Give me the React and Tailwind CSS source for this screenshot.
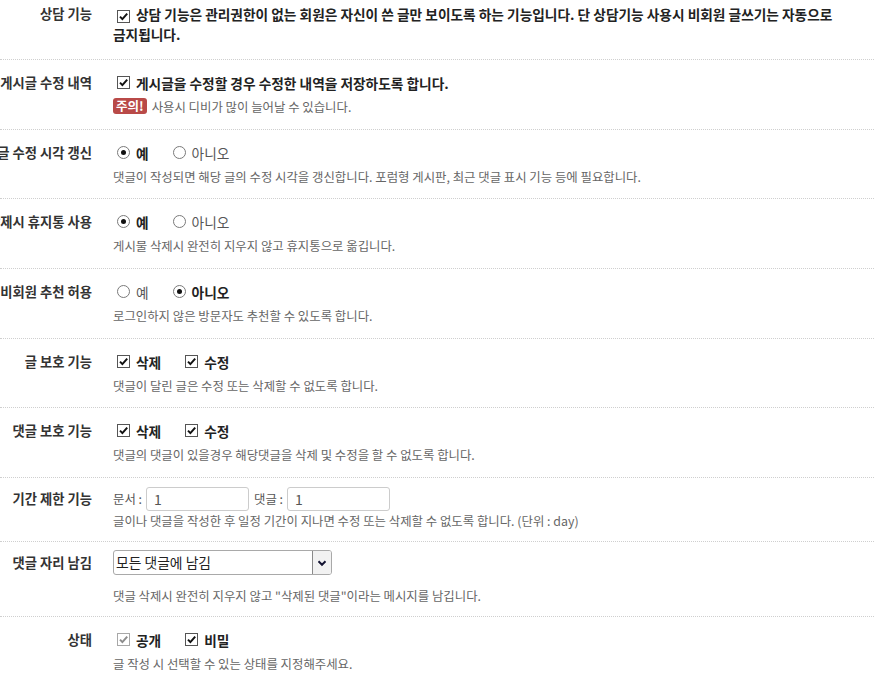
import * as React from "react";

// checkbox / radio drawn by hand so they look like the old native controls
const Check = ({ disabled, inline }) => (
  <span
    className={`${inline ? "inline-flex align-[-2px]" : "flex"} ml-1 mr-[6px] h-[13px] w-[13px] shrink-0 items-center justify-center border bg-white ${
      disabled ? "border-[#a8a8a8]" : "border-[#555]"
    }`}
  >
    <svg viewBox="0 0 11 11" className="h-[11px] w-[11px]">
      <path
        d="M2 5.6l2.4 2.5L9.2 2.6"
        fill="none"
        stroke={disabled ? "#8c8c8c" : "#111"}
        strokeWidth="2"
      />
    </svg>
  </span>
);

const Radio = ({ on }) => (
  <span className="ml-1 mr-[6px] flex h-[13px] w-[13px] shrink-0 items-center justify-center rounded-full border border-[#7a7a7a] bg-white">
    {on && <span className="h-[5px] w-[5px] rounded-full bg-[#111]" />}
  </span>
);

const Options = ({ type, items }) => (
  <div className="flex h-6 items-center">
    {items.map((item) => (
      <span key={item.text} className="mr-[20px] flex items-center">
        {type === "radio" ? (
          <Radio on={item.on} />
        ) : (
          <Check disabled={item.disabled} />
        )}
        <span
          className={
            item.on
              ? "text-[13.7px] font-bold text-[#222]"
              : "text-[13.7px] text-[#555]"
          }
        >
          {item.text}
        </span>
      </span>
    ))}
  </div>
);

const Help = ({ children }) => (
  <div className="mt-[2px] h-5 whitespace-nowrap text-[12.4px] leading-5 text-[#666]">
    {children}
  </div>
);

const Row = ({ label, pad, labelHeight, children }) => (
  <div className={`flex border-t border-dotted border-[#cfcfcf] ${pad}`}>
    <div
      className={`flex w-[92px] shrink-0 items-center justify-end ${labelHeight}`}
    >
      <span className="whitespace-nowrap text-[13.3px] font-bold text-[#333]">
        {label}
      </span>
    </div>
    <div className="ml-[21px] min-w-0 flex-1">{children}</div>
  </div>
);

const TextBox = ({ value }) => (
  <span className="flex h-6 w-[103px] items-center rounded-[3px] border border-[#cccccc] bg-white pl-[7px] text-[14px] text-[#555]">
    {value}
  </span>
);

const App = () => {
  return (
    <div className="h-[677px] w-[874px] overflow-hidden bg-white font-['Noto_Sans_CJK_KR','Noto_Sans',sans-serif]">
      {/* 상담 기능 */}
      <div className="flex pb-[15px] pt-[4px]">
        <div className="flex h-5 w-[92px] shrink-0 items-center justify-end">
          <span className="whitespace-nowrap text-[13.3px] font-bold text-[#333]">
            상담 기능
          </span>
        </div>
        <div className="ml-[21px] min-w-0 flex-1 break-keep text-[13.7px] font-bold leading-5 text-[#222]">
          <Check inline />
          상담 기능은 관리권한이 없는 회원은 자신이 쓴 글만 보이도록 하는
          기능입니다. 단 상담기능 사용시 비회원 글쓰기는 자동으로 금지됩니다.
        </div>
      </div>

      <Row label="게시글 수정 내역" pad="pt-[11px] pb-[12px]" labelHeight="h-6">
        <Options
          type="check"
          items={[{ text: "게시글을 수정할 경우 수정한 내역을 저장하도록 합니다.", on: true }]}
        />
        <Help>
          <span className="mr-[5px] inline-flex h-4 items-center rounded-[3px] bg-[#b94a48] px-[3px] align-[1px] text-[12.5px] font-bold leading-4 text-white">
            주의!
          </span>
          사용시 디비가 많이 늘어날 수 있습니다.
        </Help>
      </Row>

      <Row label="댓글 수정 시각 갱신" pad="pt-[11px] pb-[11px]" labelHeight="h-6">
        <Options
          type="radio"
          items={[
            { text: "예", on: true },
            { text: "아니오", on: false },
          ]}
        />
        <Help>
          댓글이 작성되면 해당 글의 수정 시각을 갱신합니다. 포럼형 게시판, 최근
          댓글 표시 기능 등에 필요합니다.
        </Help>
      </Row>

      <Row label="삭제시 휴지통 사용" pad="pt-[11px] pb-[12px]" labelHeight="h-6">
        <Options
          type="radio"
          items={[
            { text: "예", on: true },
            { text: "아니오", on: false },
          ]}
        />
        <Help>게시물 삭제시 완전히 지우지 않고 휴지통으로 옮깁니다.</Help>
      </Row>

      <Row label="비회원 추천 허용" pad="pt-[11px] pb-[12px]" labelHeight="h-6">
        <Options
          type="radio"
          items={[
            { text: "예", on: false },
            { text: "아니오", on: true },
          ]}
        />
        <Help>로그인하지 않은 방문자도 추천할 수 있도록 합니다.</Help>
      </Row>

      <Row label="글 보호 기능" pad="pt-[11px] pb-[11px]" labelHeight="h-6">
        <Options
          type="check"
          items={[
            { text: "삭제", on: true },
            { text: "수정", on: true },
          ]}
        />
        <Help>댓글이 달린 글은 수정 또는 삭제할 수 없도록 합니다.</Help>
      </Row>

      <Row label="댓글 보호 기능" pad="pt-[11px] pb-[12px]" labelHeight="h-6">
        <Options
          type="check"
          items={[
            { text: "삭제", on: true },
            { text: "수정", on: true },
          ]}
        />
        <Help>
          댓글의 댓글이 있을경우 해당댓글을 삭제 및 수정을 할 수 없도록 합니다.
        </Help>
      </Row>

      <Row label="기간 제한 기능" pad="pt-[9px] pb-[10px]" labelHeight="h-6">
        <div className="flex h-6 items-center text-[12.4px] text-[#555]">
          <span className="mr-1">문서 :</span>
          <TextBox value="1" />
          <span className="ml-[5px] mr-1">댓글 :</span>
          <TextBox value="1" />
        </div>
        <div className="h-5 whitespace-nowrap text-[12.4px] leading-5 text-[#666]">
          글이나 댓글을 작성한 후 일정 기간이 지나면 수정 또는 삭제할 수 없도록
          합니다. (단위 : day)
        </div>
      </Row>

      <Row label="댓글 자리 남김" pad="pt-[8px] pb-[10px]" labelHeight="h-[25px]">
        <div className="flex h-[25px] w-[219px] overflow-hidden rounded-[3px] border border-[#a9a9a9] bg-white">
          <span className="flex flex-1 items-center pl-[2px] text-[13.8px] text-[#222]">
            모든 댓글에 남김
          </span>
          <span className="flex w-[19px] items-center justify-center border-l border-[#8a8a8a] bg-[#f2f2f2]">
            <svg viewBox="0 0 10 10" className="h-[10px] w-[10px]">
              <path
                d="M1.5 3.2L5 6.8l3.5-3.6"
                fill="none"
                stroke="#141433"
                strokeWidth="2"
              />
            </svg>
          </span>
        </div>
        <div className="mt-[11px] h-5 whitespace-nowrap text-[12.4px] leading-5 text-[#666]">
          댓글 삭제시 완전히 지우지 않고 "삭제된 댓글"이라는 메시지를 남깁니다.
        </div>
      </Row>

      <Row label="상태" pad="pt-[11px] pb-[12px]" labelHeight="h-6">
        <Options
          type="check"
          items={[
            { text: "공개", on: true, disabled: true },
            { text: "비밀", on: true },
          ]}
        />
        <Help>글 작성 시 선택할 수 있는 상태를 지정해주세요.</Help>
      </Row>
    </div>
  );
};

export default App;
